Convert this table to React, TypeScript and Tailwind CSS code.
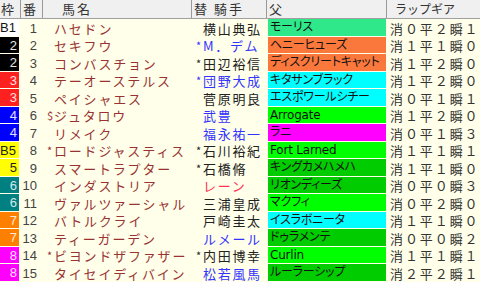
import React from 'react';

type Row = {
  waku: string;
  wakuBg: string;
  wakuText: string;
  no: number;
  mark: string;
  horse: string;
  jMark: string;
  jockey: string;
  jColor: string;
  sire: string;
  sireBg: string;
  lap: [number, number, number];
};

const W1 = 'bg-[#ffffff]';
const BLK = 'bg-[#000000]';
const RED = 'bg-[#ff2020]';
const BLU = 'bg-[#0000ff]';
const YEL = 'bg-[#ffff00]';
const TEAL = 'bg-[#008080]';
const ORG = 'bg-[#ff8000]';
const MAG = 'bg-[#ff00ff]';

const S_MINT = 'bg-[#2ee88a]';
const S_ORG = 'bg-[#fa783c]';
const S_CYAN = 'bg-[#00ffff]';
const S_LIME = 'bg-[#00ff00]';
const S_GRN = 'bg-[#00cc00]';
const S_MAG = 'bg-[#ff00ff]';

const BLACK = 'text-[#222222]';
const BLUE = 'text-[#3333ff]';
const PINK = 'text-[#ff3355]';

const rows: Row[] = [
  { waku: 'B1', wakuBg: W1, wakuText: 'text-[#111]', no: 1, mark: '', horse: 'ハセドン', jMark: '', jockey: '横山典弘', jColor: BLACK, sire: 'モーリス', sireBg: S_MINT, lap: [0, 2, 1] },
  { waku: '2', wakuBg: BLK, wakuText: 'text-[#e8e8e8]', no: 2, mark: '', horse: 'セキフウ', jMark: '*', jockey: 'M．デム', jColor: BLUE, sire: 'ヘニーヒューズ', sireBg: S_ORG, lap: [1, 1, 0] },
  { waku: '2', wakuBg: BLK, wakuText: 'text-[#e8e8e8]', no: 3, mark: '', horse: 'コンバスチョン', jMark: '*', jockey: '田辺裕信', jColor: BLACK, sire: 'ディスクリートキャット', sireBg: S_ORG, lap: [1, 2, 0] },
  { waku: '3', wakuBg: RED, wakuText: 'text-[#ffe0e0]', no: 4, mark: '', horse: 'テーオーステルス', jMark: '*', jockey: '団野大成', jColor: BLUE, sire: 'キタサンブラック', sireBg: S_CYAN, lap: [1, 2, 0] },
  { waku: '3', wakuBg: RED, wakuText: 'text-[#ffe0e0]', no: 5, mark: '', horse: 'ペイシャエス', jMark: '', jockey: '菅原明良', jColor: BLACK, sire: 'エスポワールシチー', sireBg: S_CYAN, lap: [0, 1, 1] },
  { waku: '4', wakuBg: BLU, wakuText: 'text-[#e0e0ff]', no: 6, mark: '$', horse: 'ジュタロウ', jMark: '', jockey: '武豊', jColor: BLUE, sire: 'Arrogate', sireBg: S_LIME, lap: [1, 2, 0] },
  { waku: '4', wakuBg: BLU, wakuText: 'text-[#e0e0ff]', no: 7, mark: '', horse: 'リメイク', jMark: '', jockey: '福永祐一', jColor: BLUE, sire: 'ラニ', sireBg: S_MAG, lap: [0, 1, 3] },
  { waku: 'B5', wakuBg: YEL, wakuText: 'text-[#222]', no: 8, mark: '*', horse: 'ロードジャスティス', jMark: '*', jockey: '石川裕紀', jColor: BLACK, sire: 'Fort Larned', sireBg: S_LIME, lap: [1, 1, 1] },
  { waku: '5', wakuBg: YEL, wakuText: 'text-[#222]', no: 9, mark: '', horse: 'スマートラプター', jMark: '*', jockey: '石橋脩', jColor: BLACK, sire: 'キングカメハメハ', sireBg: S_GRN, lap: [1, 1, 0] },
  { waku: '6', wakuBg: TEAL, wakuText: 'text-[#d8e8e8]', no: 10, mark: '', horse: 'インダストリア', jMark: '', jockey: 'レーン', jColor: PINK, sire: 'リオンディーズ', sireBg: S_GRN, lap: [0, 0, 3] },
  { waku: '6', wakuBg: TEAL, wakuText: 'text-[#d8e8e8]', no: 11, mark: '', horse: 'ヴァルツァーシャル', jMark: '', jockey: '三浦皇成', jColor: BLACK, sire: 'マクフィ', sireBg: S_LIME, lap: [0, 2, 0] },
  { waku: '7', wakuBg: ORG, wakuText: 'text-[#ffe8d0]', no: 12, mark: '', horse: 'バトルクライ', jMark: '', jockey: '戸崎圭太', jColor: BLACK, sire: 'イスラボニータ', sireBg: S_CYAN, lap: [1, 1, 0] },
  { waku: '7', wakuBg: ORG, wakuText: 'text-[#ffe8d0]', no: 13, mark: '', horse: 'ティーガーデン', jMark: '', jockey: 'ルメール', jColor: BLUE, sire: 'ドゥラメンテ', sireBg: S_GRN, lap: [0, 0, 2] },
  { waku: '8', wakuBg: MAG, wakuText: 'text-[#ffe0ff]', no: 14, mark: '*', horse: 'ビヨンドザファザー', jMark: '*', jockey: '内田博幸', jColor: BLACK, sire: 'Curlin', sireBg: S_LIME, lap: [1, 1, 1] },
  { waku: '8', wakuBg: MAG, wakuText: 'text-[#ffe0ff]', no: 15, mark: '', horse: 'タイセイディバイン', jMark: '', jockey: '松若風馬', jColor: BLUE, sire: 'ルーラーシップ', sireBg: S_GRN, lap: [2, 2, 1] },
];

// full-width digit
const fw = (n: number) => String.fromCharCode(0xff10 + n);

const COLS = 'grid grid-cols-[21px_22px_149px_75px_120px_93px]';

export default function App() {
  return (
    <div className="w-[480px] h-[282px] overflow-hidden bg-[#ffffea] font-['Noto_Sans_CJK_JP',sans-serif]">
      {/* header */}
      <div className={`${COLS} h-[19px] bg-[#f0f0f0] border-b border-[#a0a0a0] text-[13px] leading-[18px] text-[#333]`}>
        <div className="pl-px border-r border-[#999]">枠</div>
        <div className="pl-[2px] border-r border-[#999]">番</div>
        <div className="pl-[19px] tracking-[2px] border-r border-[#999]">馬名</div>
        <div className="pl-[2px] border-r border-[#999] flex">
          <span>替</span>
          <span className="ml-[7px] tracking-[2px]">騎手</span>
        </div>
        <div className="pl-[2px] border-r border-[#999]">父</div>
        <div className="pl-[8px] text-[12px]">ラップギア</div>
      </div>

      {rows.map((r, i) => (
        <div key={r.no} className={`${COLS} ${i % 2 === 0 ? 'h-[18px]' : 'h-[17px]'} leading-[15px]`}>
          <div className="pb-px pr-[2px]">
            <div
              className={`h-full ${r.wakuBg} ${r.wakuText} flex items-center ${r.waku.length > 1 ? 'justify-start' : 'justify-end pr-[2px]'} font-['Liberation_Sans',sans-serif] text-[13px]`}
            >
              {r.waku}
            </div>
          </div>
          <div className="flex items-center justify-end pr-[6px] text-[13px] text-[#444] font-['Liberation_Sans',sans-serif]">
            {r.no}
          </div>
          <div className="flex items-center pl-[4px] text-[13px] text-[#993333] whitespace-nowrap">
            <span className="w-[7px] text-[11px] overflow-hidden">{r.mark}</span>
            <span className="tracking-[1.8px]">{r.horse}</span>
          </div>
          <div className={`flex items-center pl-[4px] text-[13px] whitespace-nowrap ${r.jColor}`}>
            <span className={`w-[7px] text-[11px] overflow-hidden ${r.jColor === BLUE ? BLUE : 'text-[#222]'}`}>{r.jMark}</span>
            <span className="tracking-[1.7px]">{r.jockey}</span>
          </div>
          <div className="pb-px px-px">
            <div
              className={`h-full ${r.sireBg} flex items-center pl-[2px] text-[12px] tracking-[-0.2px] text-[#111] whitespace-nowrap overflow-hidden font-['DejaVu_Sans','Noto_Sans_CJK_JP',sans-serif] [font-feature-settings:'palt']`}
            >
              {r.sire}
            </div>
          </div>
          <div className="flex items-center pl-[3px] text-[13px] text-[#333] tracking-[1.9px] whitespace-nowrap">
            消{fw(r.lap[0])}平{fw(r.lap[1])}瞬{fw(r.lap[2])}
          </div>
        </div>
      ))}
    </div>
  );
}
